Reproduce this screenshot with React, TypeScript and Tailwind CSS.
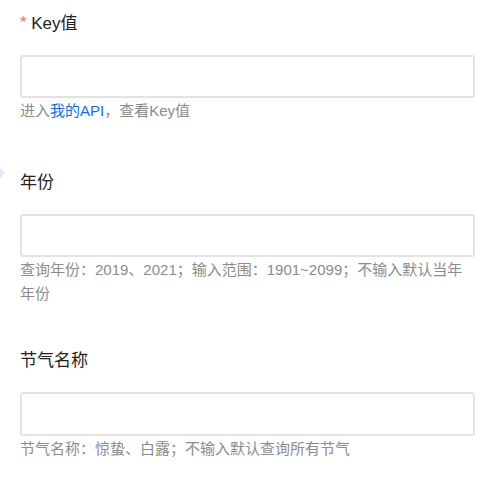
export default function App() {
  const font = { fontFamily: '"Liberation Sans", "Noto Sans CJK SC", sans-serif' };
  return (
    <div className="relative w-[500px] h-[482px] bg-white overflow-hidden pt-[12px] pl-[20px] pr-[25px]" style={font}>
      {/* faint edge marker on the left */}
      <div className="absolute left-0 top-[168px] w-0 h-0 border-y-[5px] border-y-transparent border-l-[5px] border-l-[#dbe8fb]" />

      <div className="mb-[48px]">
        <div className="h-6 leading-6 text-[17px] text-[#222] flex items-center">
          <span className="text-[#f56c6c] text-[16px] mr-[5px] relative top-[-1px]">*</span>
          Key值
        </div>
        <input className="mt-[19px] block w-full h-[43px] border-2 border-[#e3e3e3] rounded-[3px] outline-none" />
        <div className="leading-6 text-[15px] text-[#8c8c8c] pt-[1px]">
          进入<span className="text-[#0e6ef0]">我的API</span>，查看Key值
        </div>
      </div>

      <div className="mb-[43px]">
        <div className="h-6 leading-6 text-[17px] text-[#222]">年份</div>
        <input className="mt-[19px] block w-full h-[43px] border-2 border-[#e3e3e3] rounded-[3px] outline-none" />
        <div className="leading-6 text-[15px] text-[#8c8c8c] pt-[1px]">
          查询年份：2019、2021；输入范围：1901~2099；不输入默认当年年份
        </div>
      </div>

      <div>
        <div className="h-6 leading-6 text-[17px] text-[#222]">节气名称</div>
        <input className="mt-[19px] block w-full h-[44px] border-2 border-[#e3e3e3] rounded-[3px] outline-none" />
        <div className="leading-6 text-[15px] text-[#8c8c8c] pt-[1px]">
          节气名称：惊蛰、白露；不输入默认查询所有节气
        </div>
      </div>
    </div>
  );
}
